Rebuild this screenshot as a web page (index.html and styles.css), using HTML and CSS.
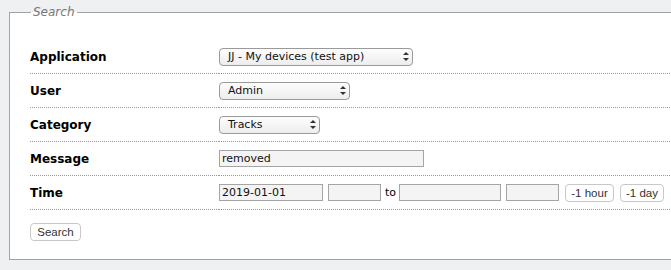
FILE: index.html
```html
<!DOCTYPE html>
<html lang="en">
<head>
    <meta charset="UTF-8">
    <meta name="viewport" content="width=device-width, initial-scale=1.0">
    <link rel="stylesheet" href="styles.css">
</head>
<body>
    <div class="page">
    <form class="search-form">
    <fieldset>
        <legend>Search</legend>
        <table class="filters">
            <tr>
                <th>Application</th>
                <td>
                    <div class="select app"><span>JJ - My devices (test app)</span><i></i></div>
                </td>
            </tr>
            <tr>
                <th>User</th>
                <td>
                    <div class="select user"><span>Admin</span><i></i></div>
                </td>
            </tr>
            <tr>
                <th>Category</th>
                <td>
                    <div class="select category"><span>Tracks</span><i></i></div>
                </td>
            </tr>
            <tr>
                <th>Message</th>
                <td><input type="text" class="message" value="removed"></td>
            </tr>
            <tr>
                <th>Time</th>
                <td>
                    <div class="time">
                        <input type="text" class="date" value="2019-01-01">
                        <input type="text" class="clock">
                        <span class="to">to</span>
                        <input type="text" class="date end">
                        <input type="text" class="clock">
                        <button type="button" class="hour">-1 hour</button>
                        <button type="button" class="day">-1 day</button>
                    </div>
                </td>
            </tr>
        </table>
        <button type="submit" class="submit">Search</button>
    </fieldset>
    </form>
    </div>
</body>
</html>
```

FILE: styles.css
```css
body {
    margin: 0;
    background-color: #eff0f2;
    font-family: "DejaVu Sans", Verdana, sans-serif;
    overflow: hidden;
}
.page {
    padding: 5px 0 0 9px;
}
fieldset {
    width: 720px;
    margin: 0;
    padding: 21px 0 18px 20px;
    border: 1px solid #a3a3a3;
    background-color: white;
}
legend {
    margin-left: 1px;
    padding: 0 2px;
    font-size: 12px;
    font-style: italic;
    color: #777;
}
.filters {
    width: 700px;
    border-collapse: collapse;
}
.filters th, .filters td {
    height: 33px;
    padding: 0;
    border-bottom: 1px dotted #999;
    vertical-align: middle;
}
.filters th {
    width: 189px;
    text-align: left;
    font-size: 12px;
    font-weight: bold;
    color: #000;
}
.select {
    display: flex;
    align-items: center;
    justify-content: space-between;
    height: 16px;
    padding: 0 6px 0 8px;
    border: 1px solid #9a9a9a;
    border-radius: 4px;
    background: linear-gradient(#fdfdfd, #ededed);
    font-size: 11px;
    color: #111;
    box-sizing: content-box;
}
.select i {
    width: 0;
    height: 9px;
    position: relative;
}
.select i::before, .select i::after {
    content: "";
    position: absolute;
    left: -3px;
    border-left: 3px solid transparent;
    border-right: 3px solid transparent;
}
.select i::before {
    top: 0;
    border-bottom: 3px solid #333;
}
.select i::after {
    bottom: 0;
    border-top: 3px solid #333;
}
.app { width: 178px; }
.user { width: 115px; }
.category { width: 85px; }
input {
    height: 17px;
    margin: 0;
    padding: 0 2px;
    border: 1px solid #a5a5a5;
    background-color: #f4f4f4;
    font-family: "DejaVu Sans", Verdana, sans-serif;
    font-size: 11px;
    color: #111;
    box-sizing: border-box;
}
.message { width: 205px; display: block; }
.time {
    display: flex;
    align-items: center;
}
.date { width: 104px; }
.clock { width: 53px; margin-left: 5px; }
.date.end { width: 102px; }
.to {
    width: 14px;
    margin-left: 4px;
    font-size: 11px;
}
button {
    height: 18px;
    padding: 0;
    border: 1px solid #c8c8c8;
    border-radius: 4px;
    background-color: white;
    font-family: "Liberation Sans", Arial, sans-serif;
    font-size: 11.5px;
    color: #333;
}
.hour { width: 49px; margin-left: 6px; }
.day { width: 44px; margin-left: 6px; }
.submit {
    width: 51px;
    margin-top: 13px;
}
```
